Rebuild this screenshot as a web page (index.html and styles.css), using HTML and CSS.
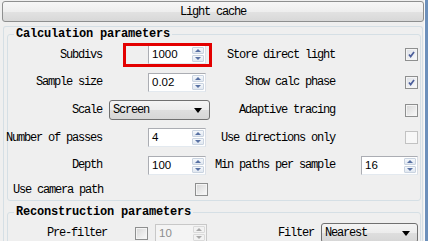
FILE: index.html
```html
<!DOCTYPE html>
<html lang="en">
<head>
  <meta charset="UTF-8" />
  <title>Light cache</title>
  <link rel="stylesheet" href="styles.css">
</head>
<body>
  <div class="window">
    <div class="main">
      <button class="rollout-title">Light cache</button>

      <div class="rollout">
        <fieldset class="group calc">
          <legend>Calculation parameters</legend>
          <div class="grid">
            <span class="lbl">Subdivs</span>
            <div class="cell"><div class="spin"><span class="val">1000</span><span class="arrows"><i class="up"></i><i class="down"></i></span></div></div>
            <span class="lbl">Store direct light</span>
            <div class="cell right"><span class="check on"><svg viewBox="0 0 13 13"><path d="M3.5 6.5 L5.5 9 L9.5 3.5" /></svg></span></div>

            <span class="lbl">Sample size</span>
            <div class="cell"><div class="spin"><span class="val">0.02</span><span class="arrows"><i class="up"></i><i class="down"></i></span></div></div>
            <span class="lbl">Show calc phase</span>
            <div class="cell right"><span class="check on"><svg viewBox="0 0 13 13"><path d="M3.5 6.5 L5.5 9 L9.5 3.5" /></svg></span></div>

            <span class="lbl">Scale</span>
            <div class="cell"><div class="select scale">Screen<i class="caret"></i></div></div>
            <span class="lbl">Adaptive tracing</span>
            <div class="cell right"><span class="check"></span></div>

            <span class="lbl">Number of passes</span>
            <div class="cell"><div class="spin"><span class="val">4</span><span class="arrows"><i class="up"></i><i class="down"></i></span></div></div>
            <span class="lbl">Use directions only</span>
            <div class="cell right"><span class="check off"></span></div>

            <span class="lbl">Depth</span>
            <div class="cell"><div class="spin"><span class="val">100</span><span class="arrows"><i class="up"></i><i class="down"></i></span></div></div>
            <span class="lbl">Min paths per sample</span>
            <div class="cell right"><div class="spin small"><span class="val">16</span><span class="arrows"><i class="up"></i><i class="down"></i></span></div></div>

            <span class="lbl left">Use camera path</span>
            <div class="cell"><span class="check cam"></span></div>
          </div>
        </fieldset>

        <fieldset class="group recon">
          <legend>Reconstruction parameters</legend>
          <div class="recon-row">
            <span class="lbl prefilter">Pre-filter</span>
            <span class="check pf"></span>
            <div class="spin disabled"><span class="val">10</span><span class="arrows"><i class="up"></i><i class="down"></i></span></div>
            <span class="lbl filter">Filter</span>
            <div class="select nearest">Nearest<i class="caret"></i></div>
          </div>
        </fieldset>
      </div>
    </div>
    <div class="edge"></div>
  </div>

  <div class="highlight"></div>
</body>
</html>
```

FILE: styles.css
```css
body {
    margin: 0;
    background: #efefef;
    font-family: "Liberation Mono", monospace;
    font-size: 12px;
    letter-spacing: -1.2px;
    color: #000;
}

.window {
    display: flex;
    height: 241px;
    overflow: hidden;
}

.main {
    width: 424px;
}

.edge {
    width: 4px;
    background: #6d90bb;
    border-left: 1px solid #fafafa;
    box-sizing: border-box;
}

.rollout-title {
    display: block;
    margin: 1px 0 0 2px;
    width: 422px;
    height: 21px;
    padding: 0;
    border: 1px solid #8e8f8f;
    border-radius: 3px;
    background: linear-gradient(#f6f6f6 0%, #eeeeee 50%, #e2e2e2 51%, #d8d8d8 100%);
    font: inherit;
    letter-spacing: -1.2px;
    color: #000;
}

.rollout {
    margin: 4px 0 0 3px;
    width: 420px;
    height: 220px;
    box-sizing: border-box;
    padding: 0 1px 0 3px;
    border: 1px solid #d5dfe5;
    border-bottom: none;
    border-radius: 3px 3px 0 0;
}

.group {
    margin: 0;
    padding: 0;
    border: 1px solid #d5dfe5;
    border-radius: 3px;
    box-sizing: border-box;
    width: 414px;
}

.group legend {
    margin-left: 6px;
    padding: 0 2px;
    font-weight: bold;
    letter-spacing: -0.2px;
    line-height: 14px;
}

.grid {
    display: grid;
    grid-template-columns: 94px 108px 125px 1fr;
    grid-template-rows: 27px 28px 28px 27px 28px 21px;
    align-items: center;
}

.lbl {
    display: flex;
    justify-content: flex-end;
    white-space: nowrap;
}

.lbl.left {
    justify-content: flex-start;
    padding-left: 5px;
}

.cell {
    display: flex;
    align-items: center;
}

.cell.right {
    justify-content: flex-end;
    padding-right: 2px;
}

/* spinner */
.spin {
    display: flex;
    width: 58px;
    height: 19px;
    margin-left: 46px;
    box-sizing: border-box;
    border: 1px solid #abadb3;
    border-right-color: #dbdfe6;
    border-bottom-color: #e3e9ef;
    background: #fff;
}

.spin.small {
    width: 57px;
    margin-left: 0;
}

.spin .val {
    flex: 1;
    padding-left: 3px;
    font-family: "Liberation Sans", Arial, sans-serif;
    font-size: 11.5px;
    letter-spacing: 0;
    line-height: 17px;
}

.arrows {
    width: 12px;
    display: flex;
    flex-direction: column;
    gap: 1px;
    padding: 1px 1px 1px 0;
}

.arrows i {
    flex: 1;
    display: flex;
    align-items: center;
    justify-content: center;
    border: 1px solid #c9d3e0;
    border-radius: 1px;
    background: linear-gradient(#f5f8fb, #e1e8f1);
}

.arrows .up::after {
    content: "";
    border-left: 3px solid transparent;
    border-right: 3px solid transparent;
    border-bottom: 3px solid #5871a3;
}

.arrows .down::after {
    content: "";
    border-left: 3px solid transparent;
    border-right: 3px solid transparent;
    border-top: 3px solid #5871a3;
}

.spin.disabled {
    width: 52px;
    margin-left: 7px;
    border-color: #c8c8c8;
    background: #f4f4f4;
}

.spin.disabled .val {
    color: #8d8d8d;
}

.spin.disabled .arrows i {
    border-color: #dadada;
    background: #f2f2f2;
}

.spin.disabled .arrows .up::after {
    border-bottom-color: #a9a9a9;
}

.spin.disabled .arrows .down::after {
    border-top-color: #a9a9a9;
}

/* dropdown */
.select {
    position: relative;
    height: 20px;
    box-sizing: border-box;
    border: 1px solid #707070;
    border-radius: 3px;
    background: linear-gradient(#f4f4f4 0%, #ececec 50%, #dedede 51%, #d6d6d6 100%);
    padding-left: 3px;
    line-height: 18px;
}

.select.scale {
    width: 101px;
    margin-left: 7px;
}

.caret {
    position: absolute;
    right: 7px;
    top: 7px;
    border-left: 4px solid transparent;
    border-right: 4px solid transparent;
    border-top: 5px solid #000;
}

/* checkbox */
.check {
    display: block;
    width: 13px;
    height: 13px;
    box-sizing: border-box;
    border: 1px solid #8e8f8f;
    background: linear-gradient(135deg, #d6d6d6, #fafafa);
    box-shadow: inset 0 0 0 1px #f4f4f4;
}

.check.on {
    background: linear-gradient(135deg, #dcdfe6, #fbfbfb);
}

.check svg {
    display: block;
    width: 11px;
    height: 11px;
}

.check svg path {
    fill: none;
    stroke: #4d5f9b;
    stroke-width: 2;
}

.check.off {
    border-color: #c2c2c2;
    background: #f7f7f7;
    box-shadow: none;
}

.check.cam {
    margin-left: 93px;
}

/* reconstruction */
.recon {
    margin-top: 4px;
    height: 60px;
}

.recon-row {
    display: flex;
    align-items: center;
    padding-top: 3px;
    height: 22px;
}

.lbl.prefilter {
    width: 99px;
}

.check.pf {
    margin-left: 28px;
}

.lbl.filter {
    width: 107px;
}

.select.nearest {
    width: 97px;
    margin-left: 7px;
}

/* red annotation over the subdivs field */
.highlight {
    position: absolute;
    left: 123px;
    top: 43px;
    width: 89px;
    height: 24px;
    box-sizing: border-box;
    border: 3px solid #e30000;
}
```
